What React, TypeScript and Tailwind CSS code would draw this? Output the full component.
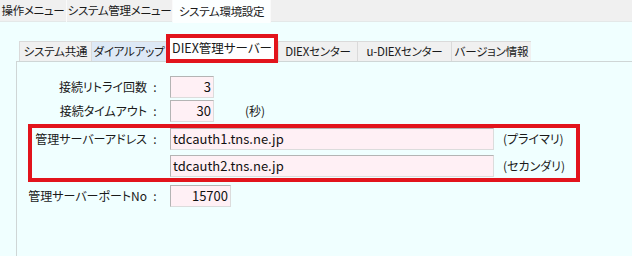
import React from 'react';

const topTabs = [
  { label: '操作メニュー', w: 'w-[67px]' },
  { label: 'システム管理メニュー', w: 'w-[106px]' },
  { label: 'システム環境設定', w: 'w-[98px]', selected: true },
];

const subTabs = [
  { label: 'システム共通', w: 'w-[72px]' },
  { label: 'ダイアルアップ', w: 'w-[75px]', hover: true },
  { label: 'DIEX管理サーバー', w: 'w-[112px]', selected: true },
  { label: 'DIEXセンター', w: 'w-[79px]' },
  { label: 'u-DIEXセンター', w: 'w-[94px]' },
  { label: 'バージョン情報', w: 'w-[80px]' },
] as { label: string; w: string; hover?: boolean; selected?: boolean }[];

function Field({ value, width, right }: { value: string; width: string; right?: boolean }) {
  return (
    <div
      className={`h-[22px] ${width} bg-[#fff0f5] border border-[#b4b4b4] border-r-[#dcdcdc] border-b-[#dcdcdc] flex items-center px-[2px] text-[13px] text-[#111] ${
        right ? 'justify-end' : 'justify-start'
      }`}
    >
      {value}
    </div>
  );
}

function Label({ text, w }: { text: string; w: string }) {
  return (
    <div className={`${w} shrink-0 flex justify-end items-center whitespace-nowrap`}>
      <span className="shrink-0">{text}</span>
      <span className="w-[16px] shrink-0 text-center">:</span>
    </div>
  );
}

export default function App() {
  return (
    <div className="w-[632px] h-[256px] overflow-hidden bg-[#f0ffff] text-[12px] text-[#1a1a1a] font-['Noto_Sans_CJK_JP','Noto_Sans',sans-serif] [font-feature-settings:'palt']">
      {/* top tabs */}
      <div className="h-[22px] bg-[#f0f0f0] flex border-b border-[#e4e8e8]">
        {topTabs.map((t) => (
          <div
            key={t.label}
            className={`${t.w} shrink-0 h-[22px] flex items-center justify-center whitespace-nowrap text-[11.5px] tracking-[-0.3px] border-r border-[#fafafa] ${
              t.selected ? 'bg-[#fcffff] h-[23px]' : ''
            }`}
          >
            {t.label}
          </div>
        ))}
      </div>

      {/* sub tabs */}
      <div className="flex items-end pl-[19px] h-[39px]">
        {subTabs.map((t) =>
          t.selected ? (
            <div
              key={t.label}
              className={`${t.w} shrink-0 h-[29px] mb-[-2px] relative z-10 border-[4px] border-[#e2141c] bg-white flex items-center justify-center whitespace-nowrap text-[12.5px]`}
            >
              {t.label}
            </div>
          ) : (
            <div
              key={t.label}
              className={`${t.w} shrink-0 h-[20px] flex items-center justify-center whitespace-nowrap text-[11.5px] tracking-[-0.2px] border-l border-t border-[#dadada] ${
                t.hover ? 'bg-[#dde9f6]' : 'bg-[#f0f0f0]'
              }`}
            >
              {t.label}
            </div>
          )
        )}
      </div>

      {/* panel */}
      <div className="ml-[16px] border-l border-t border-[#cfd6d6] h-[200px] pt-[14px] flex flex-col text-[12px]">
        <div className="flex items-center h-[22px]">
          <Label text="接続リトライ回数" w="w-[146px]" />
          <div className="ml-[7px]">
            <Field value="3" width="w-[44px]" right />
          </div>
        </div>
        <div className="flex items-center h-[22px] mt-[2px]">
          <Label text="接続タイムアウト" w="w-[146px]" />
          <div className="ml-[7px]">
            <Field value="30" width="w-[44px]" right />
          </div>
          <div className="ml-[31px]">(秒)</div>
        </div>

        <div className="ml-[11px] mt-[2px] w-[552px] border-[4px] border-[#e2141c] pb-[1px] flex flex-col gap-[5px]">
          <div className="flex items-center h-[22px]">
            <Label text="管理サーバーアドレス" w="w-[131px]" />
            <div className="ml-[7px]">
              <Field value="tdcauth1.tns.ne.jp" width="w-[324px]" />
            </div>
            <div className="ml-[9px] whitespace-nowrap">(プライマリ)</div>
          </div>
          <div className="flex items-center h-[22px]">
            <div className="w-[131px] shrink-0" />
            <div className="ml-[7px]">
              <Field value="tdcauth2.tns.ne.jp" width="w-[324px]" />
            </div>
            <div className="ml-[9px] whitespace-nowrap">(セカンダリ)</div>
          </div>
        </div>

        <div className="flex items-center h-[22px] mt-[3px]">
          <Label text="管理サーバーポートNo" w="w-[146px]" />
          <div className="ml-[7px]">
            <Field value="15700" width="w-[61px]" right />
          </div>
        </div>
      </div>
    </div>
  );
}
